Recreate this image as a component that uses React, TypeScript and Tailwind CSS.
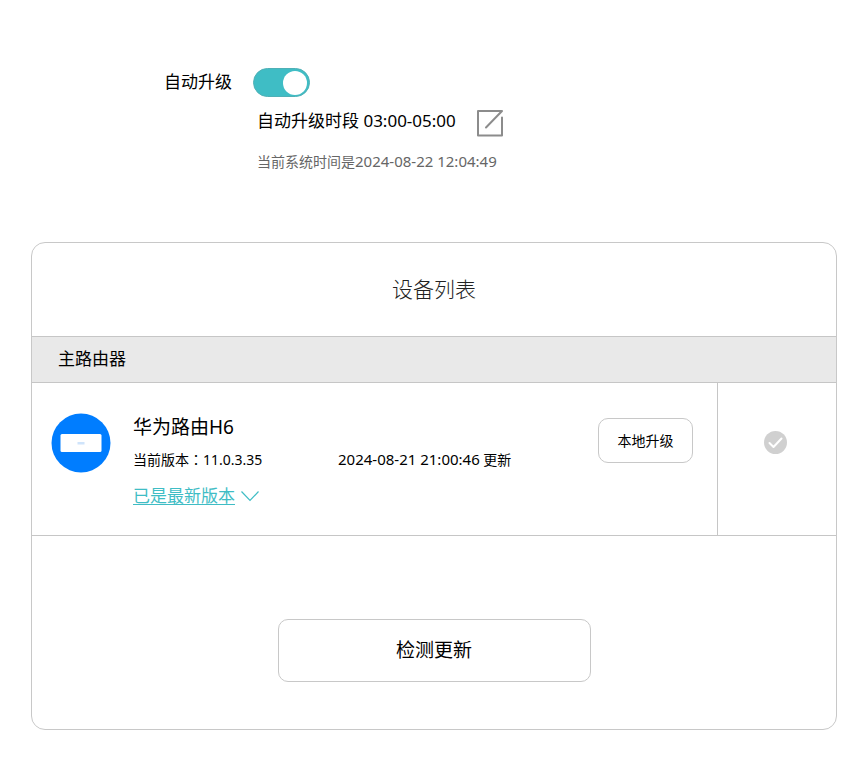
import React, { useState } from 'react';

interface Device {
  id: string;
  name: string;
  version: string;
  updatedAt: string;
}

const devices: Device[] = [
  { id: 'h6', name: '华为路由H6', version: '11.0.3.35', updatedAt: '2024-08-21 21:00:46' },
];

function EditIcon() {
  return (
    <svg className="w-7 h-7" viewBox="0 0 28 28" fill="none" stroke="#8c8c8c" strokeWidth="2" strokeLinecap="round" strokeLinejoin="round">
      <path d="M26 8.5V26.5H2V2H26L10 18.5" />
    </svg>
  );
}

function RouterIcon() {
  return (
    <svg className="w-[60px] h-[60px] shrink-0" viewBox="0 0 60 60">
      <circle cx="30" cy="30" r="29.5" fill="#007dff" />
      <rect x="9.5" y="21" width="41" height="18" rx="1.5" fill="#fff" />
      <rect x="26.5" y="29" width="7" height="2.5" fill="#cfe4fb" />
    </svg>
  );
}

function Toggle({ id, checked, onChange }: { id: string; checked: boolean; onChange: (value: boolean) => void }) {
  return (
    <input
      id={id}
      type="checkbox"
      role="switch"
      checked={checked}
      onChange={(e) => onChange(e.target.checked)}
      className="appearance-none w-[57px] h-[29px] p-0.5 rounded-full cursor-pointer bg-gray-300 border border-gray-300 checked:bg-[#3fbdc5] checked:border-[#4fb0b6] before:content-[''] before:block before:w-6 before:h-6 before:rounded-full before:bg-white checked:before:ml-auto"
    />
  );
}

function DeviceRow({ device }: { device: Device }) {
  return (
    <li className="flex min-h-[153px] border-b border-[#c6c6c6]">
      <div className="flex-1 flex items-start pt-7 pb-5 pl-[19px] pr-6">
        <div className="pt-0.5">
          <RouterIcon />
        </div>
        <div className="flex-1 ml-[22px]">
          <h3 className="text-[19px] leading-8">{device.name}</h3>
          <div className="flex mt-0.5 text-sm leading-7">
            <p className="w-[205px]">
              当前版本<span className="font-['Noto_Sans_CJK_TC']">：</span>{device.version}
            </p>
            <p className="whitespace-nowrap">
              <span className="text-[15px]">{device.updatedAt}</span> 更新
            </p>
          </div>
          <div className="flex items-center gap-1.5 mt-1.5">
            <a href="#version" className="text-[17px] leading-8 text-[#3fbdc5] underline underline-offset-2">已是最新版本</a>
            <svg className="w-[18px] h-[11px]" viewBox="0 0 18 11" fill="none" stroke="#3fbdc5" strokeWidth="1.2">
              <path d="M0.5 0.5L9 9.5L17.5 0.5" />
            </svg>
          </div>
        </div>
        <button className="w-[95px] h-[45px] mt-[7px] border border-[#c8c8c8] rounded-[10px] text-sm shrink-0">本地升级</button>
      </div>
      <div className="w-[119px] shrink-0 border-l border-[#c6c6c6] flex justify-center pt-12 pr-1">
        <label className="relative w-[23px] h-[23px]">
          <input type="checkbox" aria-label={device.name} checked disabled readOnly className="appearance-none block w-[23px] h-[23px] rounded-full bg-[#d0d0d0]" />
          <svg className="absolute inset-0" viewBox="0 0 23 23" fill="none" stroke="#fff" strokeWidth="2" strokeLinecap="round" strokeLinejoin="round">
            <path d="M5.5 12L9.5 16L17.5 7.5" />
          </svg>
        </label>
      </div>
    </li>
  );
}

export default function App() {
  const [autoUpdate, setAutoUpdate] = useState(true);

  return (
    <div className="min-h-screen bg-white text-black font-['Noto_Sans','Noto_Sans_CJK_SC',sans-serif] pt-[68px] pb-8 pl-[31px] pr-7">
      <section className="flex items-start pl-[133px]">
        <label htmlFor="auto-update" className="w-[89px] text-[17px] leading-7">自动升级</label>
        <div>
          <div className="flex">
            <Toggle id="auto-update" checked={autoUpdate} onChange={setAutoUpdate} />
          </div>
          <div className="pl-1">
            <div className="flex items-start gap-5 mt-2.5">
              <p className="text-[17px] leading-7">自动升级时段 03:00-05:00</p>
              <button aria-label="编辑升级时段" className="pt-0.5">
                <EditIcon />
              </button>
            </div>
            <p className="mt-2.5 text-sm leading-7 text-[#666]">
              当前系统时间是<span className="text-[15px]">2024-08-22 12:04:49</span>
            </p>
          </div>
        </div>
      </section>

      <section className="mt-[66px] border border-[#c8c8c8] rounded-[14px]">
        <h2 className="pt-[30px] pb-[31px] text-center text-[21px] leading-8 font-light text-[#222]">设备列表</h2>
        <div className="border-y border-[#c6c6c6] bg-[#e9e9e9] px-[26px] pt-2 pb-[9px] text-[17px] leading-7">主路由器</div>
        <ul>
          {devices.map((device) => (
            <DeviceRow key={device.id} device={device} />
          ))}
        </ul>
        <div className="flex justify-center pt-[83px] pb-[47px]">
          <button className="w-[313px] h-[63px] border border-[#c8c8c8] rounded-[10px] text-[19px]">检测更新</button>
        </div>
      </section>
    </div>
  );
}
